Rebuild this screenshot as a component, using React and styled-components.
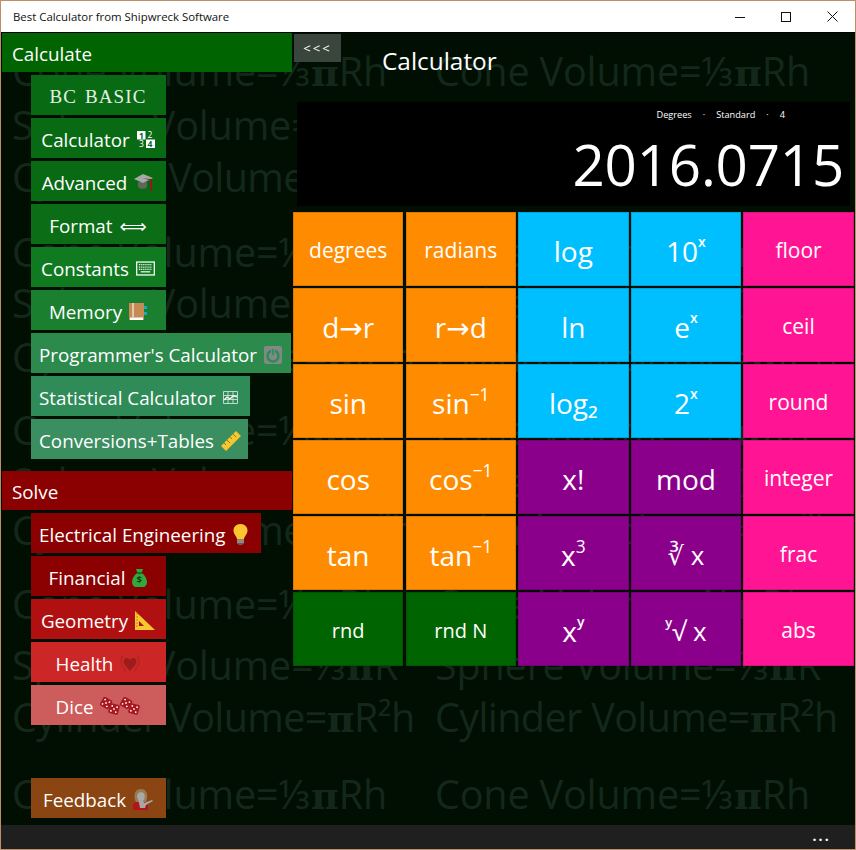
import React from 'react';
import styled, { createGlobalStyle } from 'styled-components';

const FONT = '"Open Sans", "Noto Sans", "DejaVu Sans", sans-serif';

const Global = createGlobalStyle`
  html, body { margin: 0; padding: 0; background: #000f02; }
  #root { width: 856px; height: 850px; }
`;

const Win = styled.div`
  width: 856px; height: 850px; box-sizing: border-box; border: 1px solid #bd8f68;
  display: flex; flex-direction: column; position: relative; overflow: hidden;
  background: #000f02; font-family: ${FONT}; color: #fff;
`;
const TitleBar = styled.div`
  height: 31px; flex: none; background: #fff; color: #111; display: flex; align-items: center;
  padding-left: 12px; font-size: 11.4px;
`;
const TitleText = styled.span`flex: 1;`;
const WinBtn = styled.div`
  width: 46px; height: 31px; display: flex; align-items: center; justify-content: center;
`;
const Main = styled.div`
  flex: 1; position: relative; display: flex; min-height: 0; border-top: 1px solid #000;
`;
const Watermark = styled.div`
  position: absolute; inset: 0; overflow: hidden; padding-top: 10px;
  color: #13281b; font-size: 39.5px; white-space: nowrap;
`;
const WaterRow = styled.div`
  height: ${p => p.$h}px; line-height: 56px; display: grid; grid-template-columns: 423px auto; padding-left: 11px;
  letter-spacing: ${p => p.$ls}px;
`;
const Pi = styled.b`font-family: "DejaVu Serif", serif; font-size: 38px;`;
const Sidebar = styled.nav`
  width: 291px; flex: none; position: relative; padding-left: 1px; box-sizing: border-box;
  display: flex; flex-direction: column;
`;
const Section = styled.div`
  height: 39px; width: 290px; flex: none; background: ${p => p.$bg}; display: flex; align-items: center;
  padding: 2px 0 0 10px; box-sizing: border-box; font-size: 18.8px;
`;
const Items = styled.div`
  display: flex; flex-direction: column; align-items: flex-start; gap: 3px;
  padding: 3px 0 0 29px; margin-bottom: ${p => p.$mb || 0}px;
`;
const Item = styled.div`
  min-width: 135px; height: 40px; box-sizing: border-box; padding: 3px ${p => p.$pr ?? 9}px 0 8px; background: ${p => p.$bg};
  display: flex; align-items: center; justify-content: center; gap: 7px; font-size: 18.8px; white-space: nowrap;
`;
const Mono = styled.span`font-family: "Liberation Serif", serif; font-size: 19px; letter-spacing: 1.1px; word-spacing: 2px; color: #e4f0e4;`;
const Content = styled.main`
  flex: 1; position: relative; display: flex; flex-direction: column; min-width: 0;
`;
const TopRow = styled.div`
  height: 69px; flex: none; display: flex; align-items: flex-start;
`;
const Back = styled.div`
  width: 47px; height: 28px; margin: 1px 0 0 2px; background: #3a453e; display: flex; align-items: center;
  justify-content: center; font-size: 13px; letter-spacing: 2px;
`;
const PageTitle = styled.h1`
  margin: 13px 0 0 41px; font-weight: 400; font-size: 24.4px; line-height: 30px;
`;
const Display = styled.section`
  margin-left: 5px; width: 553px; height: 104px; flex: none; background: #000; box-sizing: border-box;
  display: flex; flex-direction: column; align-items: flex-end; padding: 6px 6px 0 0;
`;
const Status = styled.div`
  font-size: 9.2px; line-height: 14px; display: flex; gap: 11px; margin-right: 59px;
`;
const Value = styled.div`
  font-size: 56.5px; line-height: 72px; margin-top: 7px; letter-spacing: -0.2px;
`;
const Keys = styled.section`
  margin-top: 6px; margin-left: 1px; display: grid; grid-template-columns: repeat(5, 110.4px); grid-auto-rows: 74px; column-gap: 2.2px; row-gap: 2px;
`;
const Key = styled.div`
  background: ${p => p.$bg}; display: flex; align-items: center; justify-content: center; padding-top: 3px;
  font-size: ${p => p.$fs}px; line-height: 1; box-sizing: border-box; border: 1px solid rgba(0,0,0,.14);
`;
const Up = styled.span`
  font-size: 0.62em; position: relative; top: -0.5em; line-height: 0;
`;
const UpLetter = styled.span`
  font-size: 0.5em; font-weight: 600; position: relative; top: -0.62em; line-height: 0;
`;
const Glyph = styled.span`font-family: "DejaVu Sans", sans-serif; font-size: ${p => p.$fs || 18}px;`;
const BottomBar = styled.footer`
  height: 24px; flex: none; background: #1f1f1f; position: relative; display: flex; justify-content: flex-end; align-items: center; padding-right: 24px;
`;
const More = styled.span`font-size: 14px; font-weight: 700; letter-spacing: 2.2px; line-height: 24px; margin-top: -2px;`;

const CalcIco = () => (
  <svg width="18" height="17" viewBox="0 0 18 17">
    <rect x="0" y="0" width="8.500" height="8.500" fill="#fff" />
    <rect x="9" y="8.500" width="9" height="8.500" fill="#fff" />
    <text x="2" y="7.600" fontSize="8.500" fontWeight="700" fill="#063">1</text>
    <text x="10.500" y="7" fontSize="8.500" fill="#fff">2</text>
    <text x="2" y="16" fontSize="8.500" fill="#fff">3</text>
    <text x="10.500" y="16" fontSize="8.500" fontWeight="700" fill="#063">4</text>
  </svg>
);
const CapIco = () => (
  <svg width="20" height="20" viewBox="0 0 20 20">
    <path d="M4 9v5c2 2.500 7 2.500 9 0V9z" fill="#5d665f" />
    <path d="M0 6 9 1l10 4-10 5z" fill="#a5aaa6" />
    <path d="M9 5.500 16 7v11h2V6z" fill="#8e1c12" />
  </svg>
);
const KeyboardIco = () => (
  <svg width="19" height="15" viewBox="0 0 20 15">
    <rect x=".7" y=".7" width="18.600" height="13.600" fill="none" stroke="#f2f8f2" strokeWidth="1.400" />
    <path d="M3 3.500h14M3 6h14M3 8.500h14" stroke="#f2f8f2" strokeWidth="1.300" strokeDasharray="1.200 .8" />
    <path d="M5 11h10" stroke="#f2f8f2" strokeWidth="1.300" />
  </svg>
);
const NoteIco = () => (
  <svg width="18" height="18" viewBox="0 0 18 18">
    <rect x="0" y="0" width="15" height="17" fill="#c58a55" />
    <path d="M1 17v-2.500h13V17z" fill="#fff" />
    <rect x="3" y="0" width="2" height="15" fill="#e9c7a4" />
    <path d="M15 3h3v3h-3zM15 9h3v3h-3z" fill="#18a9c4" />
  </svg>
);
const PowerIco = () => (
  <svg width="18" height="18" viewBox="0 0 18 18">
    <rect width="18" height="18" rx="2" fill="#7f8a84" />
    <circle cx="9" cy="10" r="5.500" fill="none" stroke="#2e8a56" strokeWidth="2.400" />
    <path d="M9 1v8" stroke="#7f8a84" strokeWidth="4" />
    <path d="M9 3v6" stroke="#2e8a56" strokeWidth="1.600" />
  </svg>
);
const ChartIco = () => (
  <svg width="15" height="13" viewBox="0 0 15 13">
    <path d="M.5.5h14v12H.500zM.5 4.500h14M.5 8.500h14M5 .5v12M10 .5v12" fill="none" stroke="#cfe3d6" strokeWidth=".9" />
    <path d="M1 9l3-3 3 2 3-3 4 1" fill="none" stroke="#fff" strokeWidth="1.200" />
  </svg>
);
const RulerIco = () => (
  <svg width="20" height="20" viewBox="0 0 20 20">
    <path d="M0 15 15 0l5 5L5 20z" fill="#f7c82d" />
    <path d="M3 12l2 2M6 9l3 3M9 6l2 2M12 3l3 3" stroke="#8d7b2c" strokeWidth="1" />
  </svg>
);
const BulbIco = () => (
  <svg width="15" height="21" viewBox="0 0 15 21">
    <path d="M7.500 0C3 0 .5 3 .5 6.500c0 4 3.500 5.500 3.500 9h7c0-3.500 3.500-5 3.500-9C14.500 3 12 0 7.500 0z" fill="#fbc531" />
    <rect x="4" y="15.500" width="7" height="4" fill="#8a8a8a" />
    <rect x="5.500" y="19.500" width="4" height="1.500" fill="#666" />
  </svg>
);
const BagIco = () => (
  <svg width="15" height="18" viewBox="0 0 15 18">
    <path d="M4 0h7l-1.500 4h-4z" fill="#2fa83a" />
    <path d="M5 4h5c3 2.500 5 6 5 9 0 3-2 5-4 5H4c-2 0-4-2-4-5 0-3 2-6.500 5-9z" fill="#33a93c" />
    <rect x="4.500" y="3.400" width="6" height="1.300" fill="#174f1c" />
    <text x="4.500" y="14" fontSize="9.500" fontWeight="700" fill="#123f17">$</text>
  </svg>
);
const SetIco = () => (
  <svg width="20" height="19" viewBox="0 0 20 19">
    <path fillRule="evenodd" d="M0 0 20 19H0zM4 10v5h5z" fill="#f8c630" />
    <path d="M1 3h2M1 6h2M1 9h2M1 12h2M1 15h2" stroke="#a5801c" strokeWidth=".8" />
  </svg>
);
const HeartIco = () => (
  <svg width="20" height="20" viewBox="0 0 20 20">
    <path d="M10 17 4.500 10.500C2.500 7.500 4 4 7 4c1.500 0 2.500 1 3 2.200C10.500 5 11.500 4 13 4c3 0 4.500 3.500 2.500 6.500z" fill="#9c1c1c" />
    <path d="M2 2 .8 6l.8 5 4 5M18 2l1.200 4-.8 5-4 5M3 1 2 5M17 1l1 4M3 15l3 3M17 15l-3 3" fill="none" stroke="#ad2424" strokeWidth="1" />
  </svg>
);
const Die = ({ x, y, r }) => (
  <g transform={`translate(${x} ${y}) rotate(${r})`}>
    <rect x="-5" y="-5" width="10" height="10" rx="1.500" fill="#a81620" />
    <circle cx="-2.500" cy="-2.500" r=".9" fill="#fff" />
    <circle cx="2.500" cy="2.500" r=".9" fill="#fff" />
    <circle cx="2.500" cy="-2.500" r=".9" fill="#fff" />
    <circle cx="-2.500" cy="2.500" r=".9" fill="#fff" />
    <circle cx="0" cy="0" r=".9" fill="#fff" />
  </g>
);
const DiceIco = () => (
  <svg width="40" height="19" viewBox="0 0 40 19">
    <Die x={6} y={6} r={30} /><Die x={14} y={12} r={15} />
    <Die x={26} y={6} r={30} /><Die x={34} y={12} r={15} />
  </svg>
);
const PersonIco = () => (
  <svg width="20" height="21" viewBox="0 0 20 21">
    <path d="M2 11C0 3 4 0 8 0s7 3 6 10l-1 3H3z" fill="#9a7a55" />
    <ellipse cx="8" cy="7.500" rx="3.800" ry="4.300" fill="#a8aaa8" />
    <path d="M0 21v-4c0-2 2-4 4-4h8c2 0 3 2 3 4v4z" fill="#b3131b" />
    <path d="M5.500 11h4.500l1 3 8-3 1 1-7 4-1 3H7z" fill="#a5a8a5" />
  </svg>
);
const WinMin = () => <svg width="10" height="10"><path d="M0 5.500h10" stroke="#111" /></svg>;
const WinMax = () => <svg width="10" height="10"><rect x=".5" y=".5" width="9" height="9" fill="none" stroke="#111" /></svg>;
const WinClose = () => <svg width="11" height="11"><path d="M.5.5l10 10M10.500.5l-10 10" stroke="#111" /></svg>;

const calc = [
  { t: <Mono>BC BASIC</Mono>, bg: '#086a13' },
  { t: 'Calculator', i: <CalcIco />, bg: '#086a13' },
  { t: 'Advanced', i: <CapIco />, bg: '#086a13' },
  { t: 'Format', i: <Glyph $fs={19}>⟺</Glyph>, bg: '#0b6e17' },
  { t: 'Constants', i: <KeyboardIco />, bg: '#0f7a20' },
  { t: 'Memory', i: <NoteIco />, bg: '#1a8030' },
  { t: "Programmer's Calculator", i: <PowerIco />, bg: '#2b8a4c' },
  { t: 'Statistical Calculator', i: <ChartIco />, bg: '#2f8b58', pr: 12 },
  { t: 'Conversions+Tables', i: <RulerIco />, bg: '#3a8e5f', pr: 7 },
];
const solve = [
  { t: 'Electrical Engineering', i: <BulbIco />, bg: '#8b0000', pr: 13 },
  { t: 'Financial', i: <BagIco />, bg: '#8b0000' },
  { t: 'Geometry', i: <SetIco />, bg: '#b01010' },
  { t: 'Health', i: <HeartIco />, bg: '#cd2626' },
  { t: 'Dice', i: <DiceIco />, bg: '#cd5c5c' },
];

const O = '#ff8c00', B = '#00bfff', P = '#ff1493', M = '#8b008b', G = '#006400';
const inv = s => <>{s}<Up>−1</Up></>;
const keys = [
  ['degrees', O, 21], ['radians', O, 21], ['log', B, 28], [<>10<UpLetter>x</UpLetter></>, B, 28], ['floor', P, 21],
  ['d→r', O, 28], ['r→d', O, 28], ['ln', B, 28], [<>e<UpLetter>x</UpLetter></>, B, 28], ['ceil', P, 21],
  ['sin', O, 28], [inv('sin'), O, 28], ['log₂', B, 28], [<>2<UpLetter>x</UpLetter></>, B, 28], ['round', P, 21],
  ['cos', O, 28], [inv('cos'), O, 28], ['x!', M, 28], ['mod', M, 28], ['integer', P, 21],
  ['tan', O, 28], [inv('tan'), O, 28], [<>x<Up>3</Up></>, M, 28], ['∛ x', M, 26], ['frac', P, 21],
  ['rnd', G, 20], ['rnd N', G, 20], [<>x<UpLetter>y</UpLetter></>, M, 28], [<><UpLetter>y</UpLetter>√ x</>, M, 26], ['abs', P, 21],
];

const texts = [
  <>Cone Volume=⅓<Pi>π</Pi>Rh</>,
  <>Sphere Volume=⅓<Pi>π</Pi>R</>,
  <>Cylinder Volume=<Pi>π</Pi>R²h</>,
];
const spacing = [-0.15, -0.15, -0.6];
const gaps = [54, 52, 75, 51, 54, 73, 52, 48, 74, 61, 52, 77, 40];

export default function App() {
  return (
    <>
      <Global />
      <Win>
        <TitleBar>
          <TitleText>Best Calculator from Shipwreck Software</TitleText>
          <WinBtn><WinMin /></WinBtn>
          <WinBtn><WinMax /></WinBtn>
          <WinBtn><WinClose /></WinBtn>
        </TitleBar>
        <Main>
          <Watermark aria-hidden="true">
            {gaps.map((h, i) => (
              <WaterRow key={i} $h={h} $ls={spacing[i % 3]}><span>{texts[i % 3]}</span><span>{texts[i % 3]}</span></WaterRow>
            ))}
          </Watermark>
          <Sidebar>
            <Section $bg="#006400">Calculate</Section>
            <Items $mb={12}>
              {calc.map((c, i) => <Item key={i} $bg={c.bg} $pr={c.pr}>{c.t}{c.i}</Item>)}
            </Items>
            <Section $bg="#8b0000">Solve</Section>
            <Items $mb={50}>
              {solve.map((c, i) => <Item key={i} $bg={c.bg} $pr={c.pr}>{c.t}{c.i}</Item>)}
            </Items>
            <Items>
              <Item $bg="#8b4513">Feedback<PersonIco /></Item>
            </Items>
          </Sidebar>
          <Content>
            <TopRow>
              <Back>&lt;&lt;&lt;</Back>
              <PageTitle>Calculator</PageTitle>
            </TopRow>
            <Display>
              <Status><span>Degrees</span><span>·</span><span>Standard</span><span>·</span><span>4</span></Status>
              <Value>2016.0715</Value>
            </Display>
            <Keys>
              {keys.map(([t, bg, fs], i) => <Key key={i} $bg={bg} $fs={fs}>{t}</Key>)}
            </Keys>
          </Content>
        </Main>
        <BottomBar><More>...</More></BottomBar>
      </Win>
    </>
  );
}
